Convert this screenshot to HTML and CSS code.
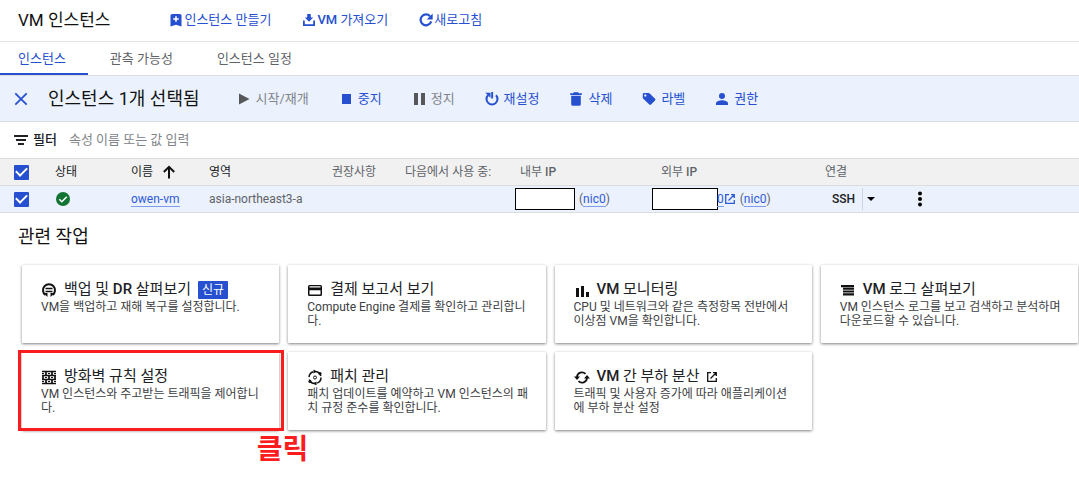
FILE: index.html
```
<!DOCTYPE html>
<html lang="ko">
<head>
<meta charset="utf-8">
<meta name="viewport" content="width=device-width, initial-scale=1">
<title>VM 인스턴스</title>
<link rel="stylesheet" href="styles.css">
</head>
<body>
<header class="topbar">
  <h1 class="page-title">VM 인스턴스</h1>
  <div class="top-actions">
    <button class="action" type="button">
      <svg class="icon-sm" viewBox="0 0 14 14"><path fill="currentColor" fill-rule="evenodd" d="M3 1h8a1.500 1.500 0 0 1 1.500 1.500V13.500L7 11.800 1.500 13.500V2.500A1.500 1.500 0 0 1 3 1zM6.200 3.200v2H4.200v1.600h2v2h1.600v-2h2V5.200h-2v-2z"/></svg>인스턴스 만들기</button>
    <button class="action" type="button">
      <svg class="icon-sm" viewBox="0 0 14 14"><path fill="currentColor" d="M5.200 1h3.600v3.600h2.400L7 8.800 2.800 4.600h2.400z"/><path fill="none" stroke="currentColor" stroke-width="1.800" d="M1.900 7.500v4.600h10.200V7.500"/></svg><span><span class="latin">VM</span> 가져오기</span></button>
    <button class="action" type="button">
      <svg class="icon-sm" viewBox="0 0 14 14"><path fill="none" stroke="currentColor" stroke-width="2.200" d="M11 3.200A5.400 5.400 0 1 0 12.200 8.400"/><path fill="currentColor" d="M13.700.5v6H7.700z"/></svg>새로고침</button>
  </div>
</header>

<nav class="tabs">
  <a class="tab tab-active" href="#instances">인스턴스</a>
  <a class="tab" href="#observability">관측 가능성</a>
  <a class="tab" href="#schedules">인스턴스 일정</a>
</nav>

<section class="selection-bar" id="instances">
  <button class="close" type="button" aria-label="선택 해제"><svg class="icon-sm" viewBox="0 0 14 14"><path fill="none" stroke="currentColor" stroke-width="1.800" d="M1.300 1.300l11.400 11.400M12.700 1.300L1.300 12.700"/></svg></button>
  <h2 class="selection-title">인스턴스 1개 선택됨</h2>
  <div class="tools">
    <button class="tool tool-off" type="button"><svg class="icon-sm" viewBox="0 0 14 14"><path fill="#555759" d="M2 1.500v11L12.500 7z"/></svg>시작/재개</button>
    <button class="tool" type="button"><svg class="icon-sm" viewBox="0 0 14 14"><path fill="currentColor" d="M3 2h9v10H3z"/></svg>중지</button>
    <button class="tool tool-off" type="button"><svg class="icon-sm" viewBox="0 0 14 14"><path fill="#555759" d="M2 1h4v12H2zM9 1h4v12H9z"/></svg>정지</button>
    <button class="tool" type="button"><svg class="icon-sm" viewBox="0 0 14 14"><path fill="none" stroke="currentColor" stroke-width="2" d="M3 3.200A5.500 5.500 0 1 0 11 3.200"/><path fill="currentColor" d="M6.200 0h1.900v6.500H6.200zM.3.800h5.200v5z"/></svg>재설정</button>
    <button class="tool" type="button"><svg class="icon-sm" viewBox="0 0 14 14"><path fill="currentColor" d="M4.800.3h4.400l.8.900h2.800v1.700H1.200V1.200H4zM2.200 3.800h9.600v8.400a1.500 1.500 0 0 1-1.500 1.500H3.700a1.500 1.500 0 0 1-1.500-1.500z"/></svg>삭제</button>
    <button class="tool" type="button"><svg class="icon-sm" viewBox="0 0 14 14"><path fill="currentColor" fill-rule="evenodd" d="M2 1h4.700q.6 0 1 .4l5.400 5.400q.8.800 0 1.700L9 12.600q-.8.800-1.700 0L1.300 6.700Q.8 6.300.8 5.700V2.200Q.8 1 2 1zm1.300 1.300a1.200 1.200 0 1 0 .1 0z"/></svg>라벨</button>
    <button class="tool" type="button"><svg class="icon-sm" viewBox="0 0 14 14"><circle cx="7" cy="4" r="3" fill="currentColor"/><path fill="currentColor" d="M1 13v-1.700C1 9.300 4.600 8.300 7 8.300s6 1 6 3V13z"/></svg>권한</button>
  </div>
</section>

<div class="filter">
  <svg class="icon-sm" viewBox="0 0 14 14"><path fill="#202124" d="M0 2h14v2H0zM2 6h10v2H2zM4 10h6v2H4z"/></svg>
  <label class="filter-label" for="filter">필터</label>
  <input class="filter-input" id="filter" type="text" placeholder="속성 이름 또는 값 입력">
</div>

<table class="vm-table">
  <colgroup>
    <col class="c-check"><col class="c-state"><col class="c-name"><col class="c-zone"><col class="c-advice"><col class="c-used"><col class="c-internal"><col class="c-external"><col class="c-connect"><col>
  </colgroup>
  <thead>
    <tr>
      <th class="check-cell"><input class="check" type="checkbox" aria-label="모두 선택" checked></th>
      <th class="dark">상태</th>
      <th class="dark"><span class="sort">이름<svg class="icon-sm" viewBox="0 0 14 14"><path fill="none" stroke="#111" stroke-width="2" d="M7 13.500V2M1.800 7L7 1.800 12.200 7"/></svg></span></th>
      <th class="dark">영역</th>
      <th>권장사항</th>
      <th>다음에서 사용 중:</th>
      <th class="inset-sm">내부 <span class="latin">IP</span></th>
      <th class="inset">외부 <span class="latin">IP</span></th>
      <th>연결</th>
      <th></th>
    </tr>
  </thead>
  <tbody>
    <tr>
      <td class="check-cell"><input class="check" type="checkbox" aria-label="owen-vm 선택" checked></td>
      <td><svg class="status" viewBox="0 0 16 16" role="img" aria-label="실행 중"><circle cx="8" cy="8" r="7" fill="#137333"/><path fill="none" stroke="#fff" stroke-width="1.500" d="M4.300 8.200l2.500 2.500 5-5"/></svg></td>
      <td><a class="link" href="#owen-vm">owen-vm</a></td>
      <td>asia-northeast3-a</td>
      <td></td>
      <td></td>
      <td><span class="ip"><span class="mask"></span><span class="nic">(<a class="link" href="#nic0">nic0</a>)</span></span></td>
      <td><span class="ip"><span class="mask mask-wide"></span><a class="link" href="#external">0</a><svg class="icon-open" viewBox="0 0 12 12"><path fill="none" stroke="#2f5bd7" stroke-width="1.300" d="M5 1.700H1.700v8.600h8.600V7M7 1.700h3.300V5M10 2L4.500 7.500"/></svg><span class="nic">(<a class="link" href="#nic0-external">nic0</a>)</span></span></td>
      <td><span class="ssh"><button class="ssh-button" type="button">SSH</button><button class="ssh-menu" type="button" aria-label="SSH 옵션"><svg class="caret" viewBox="0 0 8 4"><path d="M0 0h8L4 4z"/></svg></button></span></td>
      <td><button class="more" type="button" aria-label="추가 작업"><svg class="more-icon" viewBox="0 0 6 16"><circle cx="3" cy="2.500" r="2"/><circle cx="3" cy="8" r="2"/><circle cx="3" cy="13.500" r="2"/></svg></button></td>
    </tr>
  </tbody>
</table>

<main class="related">
  <h2 class="related-title">관련 작업</h2>
  <div class="cards">
    <article class="card">
      <h3 class="card-title"><svg class="icon" viewBox="0 0 16 16"><path fill="none" stroke="#111" stroke-width="2" d="M4.500 13A6 6 0 1 1 11.500 13"/><path fill="none" stroke="#111" stroke-width="1.500" d="M4.500 6.500h7M4.500 9.500h7"/><path fill="#111" d="M2.500 11h4v4zM13.500 11h-4v4z"/></svg><span>백업 및 <span class="latin">DR</span> 살펴보기</span><span class="badge">신규</span></h3>
      <p class="card-text">VM을 백업하고 재해 복구를 설정합니다.</p>
    </article>
    <article class="card">
      <h3 class="card-title"><svg class="icon" viewBox="0 0 16 16"><path fill="#111" fill-rule="evenodd" d="M2.500 3h11A1.500 1.500 0 0 1 15 4.500v8a1.500 1.500 0 0 1-1.500 1.500h-11A1.500 1.500 0 0 1 1 12.500v-8A1.500 1.500 0 0 1 2.500 3zm0 1.300v1.200h11V4.300zm0 4v4.300h11V8.300z"/></svg><span>결제 보고서 보기</span></h3>
      <p class="card-text">Compute Engine 결제를 확인하고 관리합니다.</p>
    </article>
    <article class="card">
      <h3 class="card-title"><svg class="icon" viewBox="0 0 16 16"><path fill="#111" d="M2 6h3v9H2zM7 4h3v11H7zM12 10h3v5h-3z"/></svg><span><span class="latin">VM</span> 모니터링</span></h3>
      <p class="card-text">CPU 및 네트워크와 같은 측정항목 전반에서 이상점 VM을 확인합니다.</p>
    </article>
    <article class="card">
      <h3 class="card-title"><svg class="icon" viewBox="0 0 16 16"><path fill="#111" d="M1 3h13v2.200H1zM3 5.800h11v2H3zM3 8.500h11v2H3zM3 11.200h11v2.300H3z"/></svg><span><span class="latin">VM</span> 로그 살펴보기</span></h3>
      <p class="card-text">VM 인스턴스 로그를 보고 검색하고 분석하며 다운로드할 수 있습니다.</p>
    </article>
    <article class="card card-marked">
      <h3 class="card-title"><svg class="icon" viewBox="0 0 16 16"><path fill="none" stroke="#111" stroke-width="1.700" d="M1 2.500h14M1 6.500h14M1 10.500h14M1 14.500h14M5 2.500v4M11 2.500v4M2 6.500v4M8 6.500v4M14 6.500v4M5 10.500v4M11 10.500v4"/><path fill="none" stroke="#111" d="M1 4.500h2M7 4.500h2M13 4.500h2M4 8.500h2M10 8.500h2M1 12.500h2M7 12.500h2M13 12.500h2"/></svg><span>방화벽 규칙 설정</span></h3>
      <p class="card-text">VM 인스턴스와 주고받는 트래픽을 제어합니다.</p>
      <strong class="mark-label">클릭</strong>
    </article>
    <article class="card">
      <h3 class="card-title"><svg class="icon" viewBox="0 0 16 16"><circle cx="8" cy="8.500" r="6" fill="none" stroke="#111" stroke-width="1.500" stroke-dasharray="7 2.400"/><circle cx="8" cy="8.500" r="1.500" fill="none" stroke="#111"/><path fill="#111" d="M6.500.5l3.500 2-3.500 2zM9.500 12.500v4L6 14.500z"/><circle cx="13" cy="4.500" r="1.600" fill="#111"/><circle cx="3" cy="12.500" r="1.600" fill="#111"/></svg><span>패치 관리</span></h3>
      <p class="card-text">패치 업데이트를 예약하고 VM 인스턴스의 패치 규정 준수를 확인합니다.</p>
    </article>
    <article class="card">
      <h3 class="card-title"><svg class="icon" viewBox="0 0 16 16"><path fill="none" stroke="#111" stroke-width="1.800" d="M3 8a5 5 0 0 1 8.500-3.200M13 9a5 5 0 0 1-8.500 3.200"/><path fill="#111" d="M0 7.500h6L3 11zM10 9.500h6L13 6z"/></svg><span><span class="latin">VM</span> 간 부하 분산</span><svg class="icon-open" viewBox="0 0 12 12"><path fill="none" stroke="#111" stroke-width="1.300" d="M5 1.700H1.700v8.600h8.600V7M7 1.700h3.300V5M10 2L4.500 7.500"/></svg></h3>
      <p class="card-text">트래픽 및 사용자 증가에 따라 애플리케이션에 부하 분산 설정</p>
    </article>
  </div>
</main>
</body>
</html>
```
FILE: styles.css
```
* {
  box-sizing: border-box;
}

body {
  margin: 0;
  background: #fff;
  color: #202124;
  font-family: Roboto, "Noto Sans CJK KR", sans-serif;
  font-size: 12px;
  line-height: 14px;
}

h1, h2, h3, p {
  margin: 0;
  font-weight: 400;
}

button {
  border: 0;
  padding: 0;
  background: none;
  color: #2650cf;
  font: inherit;
}

svg {
  display: block;
  flex: none;
}

.latin {
  font-weight: 500;
}

.icon-sm {
  width: 14px;
  height: 14px;
}

.icon {
  width: 16px;
  height: 16px;
}

.icon-open {
  width: 12px;
  height: 12px;
}

.topbar {
  display: flex;
  align-items: center;
  gap: 59px;
  height: 42px;
  padding: 0 18px 2px;
  border-bottom: 1px solid #e3e4e6;
}

.page-title {
  font-size: 17px;
  line-height: 24px;
  color: #111;
}

.top-actions {
  display: flex;
  gap: 31px;
}

.action {
  display: flex;
  align-items: center;
  gap: 1px;
  font-size: 13px;
  line-height: 20px;
}

.tabs {
  display: flex;
  height: 34px;
  border-bottom: 1px solid #dcdde0;
}

.tab {
  padding: 7px 22px 0;
  color: #5f6368;
  font-size: 13px;
  line-height: 20px;
  text-decoration: none;
}

.tab-active {
  padding-left: 18px;
  border-bottom: 2px solid #2650cf;
  color: #2650cf;
}

.selection-bar {
  display: flex;
  align-items: center;
  height: 46px;
  padding: 0 14px;
  border-bottom: 1px solid #dadce0;
  background: #ebf1fd;
}

.close {
  margin-right: 20px;
}

.selection-title {
  margin-right: 37px;
  color: #111;
  font-size: 18px;
  line-height: 26px;
}

.tools {
  display: flex;
  gap: 30px;
}

.tool {
  display: flex;
  align-items: center;
  gap: 5px;
  font-size: 13px;
  line-height: 20px;
}

.tool-off {
  color: #80848a;
}

.filter {
  display: flex;
  align-items: center;
  height: 36px;
  padding: 0 14px;
}

.filter-label {
  margin: 0 12px 0 5px;
  font-size: 13px;
  font-weight: 500;
}

.filter-input {
  flex: 1;
  border: 0;
  padding: 0;
  outline: 0;
  background: none;
  font: inherit;
  font-size: 13px;
}

.filter-input::placeholder {
  color: #80848a;
}

.vm-table {
  width: 100%;
  border-collapse: collapse;
  table-layout: fixed;
  color: #5f6368;
}

.vm-table th,
.vm-table td {
  height: 27px;
  padding: 0;
  border-top: 1px solid #dadce0;
  border-bottom: 1px solid #dadce0;
  text-align: left;
  vertical-align: middle;
  white-space: nowrap;
}

.vm-table th {
  background: #f1f1f1;
  font-weight: 400;
}

.vm-table td {
  background: #ebf1fd;
}

.vm-table .dark {
  color: #202124;
}

.vm-table .inset {
  padding-left: 9px;
}

.vm-table .inset-sm {
  padding-left: 5px;
}

.vm-table .check-cell {
  padding-left: 14px;
}

.c-check { width: 55px; }
.c-state { width: 76px; }
.c-name { width: 78px; }
.c-zone { width: 123px; }
.c-advice { width: 73px; }
.c-used { width: 110px; }
.c-internal { width: 137px; }
.c-external { width: 173px; }
.c-connect { width: 92px; }

.check {
  display: grid;
  place-items: center;
  width: 15px;
  height: 15px;
  margin: 0;
  border-radius: 1px;
  appearance: none;
  background: #2650cf;
}

.check:checked::before {
  width: 9px;
  height: 5px;
  margin-bottom: 3px;
  border: solid #fff;
  border-width: 0 0 2px 2px;
  transform: rotate(-45deg);
  content: "";
}

.sort {
  display: flex;
  align-items: center;
  gap: 9px;
}

.status {
  width: 16px;
  height: 16px;
}

.link {
  border-bottom: 1px solid #7d9cec;
  color: #2f5bd7;
  text-decoration: none;
}

.ip {
  display: flex;
  align-items: center;
}

.nic {
  margin-left: 4px;
}

.mask {
  width: 60px;
  height: 22px;
  border: 1px solid #000;
  background: #fff;
}

.mask-wide {
  width: 66px;
}

.mask-wide + .link {
  margin-left: -1px;
}

.ssh {
  display: flex;
  align-items: center;
  padding-left: 7px;
}

.ssh-button {
  padding-right: 7px;
  border-right: 1px solid #d0d5df;
  color: #202124;
  font-weight: 500;
  line-height: 22px;
}

.ssh-menu {
  padding: 4px;
}

.caret {
  width: 8px;
  height: 4px;
}

.more {
  display: block;
}

.more-icon {
  width: 6px;
  height: 16px;
}

.related {
  padding: 11px 1px 47px 22px;
}

.related-title {
  margin: 0 0 15px -4px;
  color: #111;
  font-size: 18px;
  line-height: 26px;
}

.cards {
  display: grid;
  grid-template-columns: repeat(4, 1fr);
  gap: 9px;
}

.card {
  position: relative;
  min-height: 78px;
  padding: 14px 16px 12px 19px;
  border-radius: 1px;
  background: #fff;
  box-shadow: 0 1px 3px rgba(0, 0, 0, 0.5);
}

.card-title {
  display: flex;
  align-items: center;
  gap: 7px;
  color: #202124;
  font-size: 15px;
  line-height: 21px;
}

.card-text {
  color: #3c4043;
  word-break: break-all;
}

.badge {
  padding: 0 4px;
  border-radius: 1px;
  background: #2650cf;
  color: #fff;
  font-size: 12px;
  line-height: 18px;
}

.card-marked::after {
  position: absolute;
  inset: -2px -5px -1px -4px;
  border: 3px solid #fb1d1d;
  content: "";
}

.mark-label {
  position: absolute;
  top: 100%;
  right: -29px;
  color: #fb1d1d;
  font-size: 28px;
  line-height: 40px;
}
```
